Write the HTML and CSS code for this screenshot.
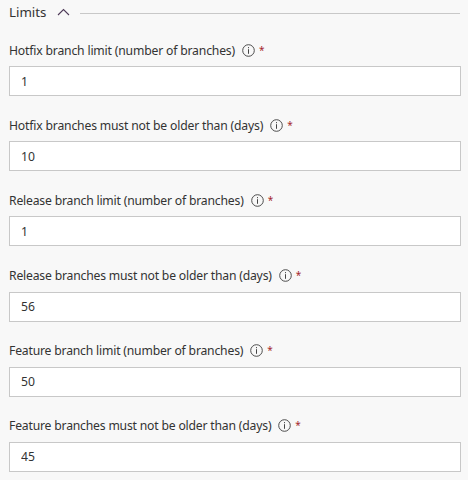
FILE: index.html
```html
<!DOCTYPE html>
<html lang="en"><head><meta charset="utf-8"><title>Limits</title><link rel="stylesheet" href="styles.css"></head>
<body>
<svg class="defs" width="0" height="0"><symbol id="info" viewBox="0 0 13 13"><circle cx="6.5" cy="6.5" r="5.8" fill="none" stroke="currentColor" stroke-width=".95"/><path d="M6.5 5.2v4.6M6.5 3.1v1.1" stroke="currentColor" fill="none"/></symbol></svg>
<header class="head"><span class="title">Limits</span><svg class="chev" viewBox="0 0 13 8"><path d="M1 7l5.5-5.5L12 7" fill="none" stroke="currentColor" stroke-width="1.1"/></svg><span class="rule"></span></header>
<main class="fields">
<div class="field"><div class="label"><span class="text" id="a">Hotfix branch limit (number of branches)</span><svg class="info"><use href="#info"/></svg><span class="req">*</span></div><input aria-labelledby="a" value="1"></div>
<div class="field"><div class="label"><span class="text" id="b">Hotfix branches must not be older than (days)</span><svg class="info"><use href="#info"/></svg><span class="req">*</span></div><input aria-labelledby="b" value="10"></div>
<div class="field"><div class="label"><span class="text tight" id="c">Release branch limit (number of branches)</span><svg class="info"><use href="#info"/></svg><span class="req">*</span></div><input aria-labelledby="c" value="1"></div>
<div class="field"><div class="label"><span class="text tight" id="d">Release branches must not be older than (days)</span><svg class="info"><use href="#info"/></svg><span class="req">*</span></div><input aria-labelledby="d" value="56"></div>
<div class="field"><div class="label"><span class="text tight" id="e">Feature branch limit (number of branches)</span><svg class="info"><use href="#info"/></svg><span class="req">*</span></div><input aria-labelledby="e" value="50"></div>
<div class="field"><div class="label"><span class="text tight" id="f">Feature branches must not be older than (days)</span><svg class="info"><use href="#info"/></svg><span class="req">*</span></div><input aria-labelledby="f" value="45"></div>
</main>
</body></html>
```
FILE: styles.css
```css
* { box-sizing: border-box; }
body { margin: 0; padding: 4px 7px 0 9px; height: 480px; overflow: hidden; background: #f8f8f8; color: #333; font: 12.2px/18px "Noto Sans", "Open Sans", sans-serif; }
.defs { position: absolute; }
.head { display: flex; align-items: center; height: 18px; }
.title { font-size: 13.3px; width: 48px; white-space: nowrap; position: relative; top: -1px; }
.chev { width: 13px; height: 8px; color: #4e3a58; position: relative; top: -1px; }
.rule { flex: 1; height: 1px; margin: 0 1px 0 10px; background: #c8c8c8; }
.fields { display: grid; grid-auto-rows: 55px; row-gap: 20.15px; margin-top: 19.2px; }
.label { display: flex; align-items: center; height: 18px; margin-bottom: 7px; padding-top: 1px; }
.text { white-space: nowrap; letter-spacing: -0.18px; }
.text.tight { letter-spacing: -0.195px; }
.info { width: 13px; height: 13px; margin-left: 7px; margin-top: -1px; color: #444; }
.req { margin: -2px 0 0 4px; font-size: 10px; color: #a4262c; }
input { display: block; width: 100%; height: 30px; padding: 0 11px; border: 1px solid #c8c8c8; border-radius: 0; background: #fff; color: #333; font: inherit; }
```
